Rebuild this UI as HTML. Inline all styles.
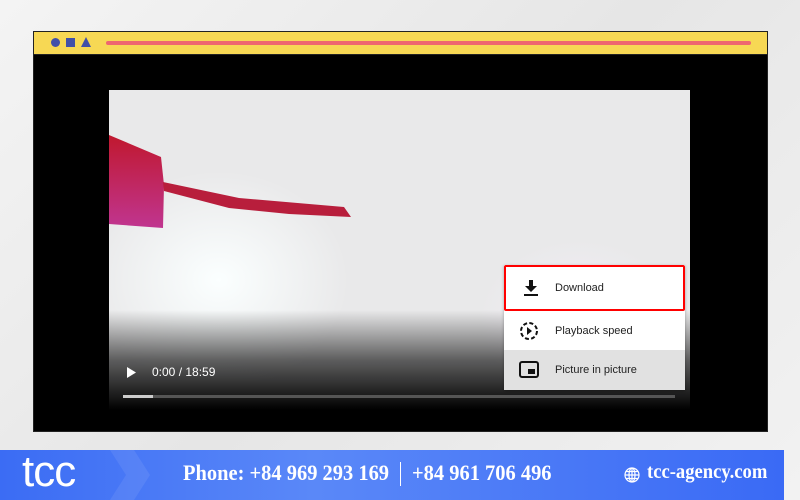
<!DOCTYPE html>
<html><head><style>
body{margin:0;width:800px;height:500px;overflow:hidden;background:linear-gradient(135deg,#f4f4f4,#e6e6e6 50%,#f2f2f2);font-family:"Liberation Sans",sans-serif;position:relative}
.frame{position:absolute;left:33px;top:31px;width:735px;height:401px;background:#000;border:1px solid #222;box-sizing:border-box}
.bar{position:absolute;left:0;top:0;width:100%;height:22px;background:#f7d854;border-bottom:1px solid #222}
.video{position:absolute;left:75px;top:58px;width:581px;height:320px;background:radial-gradient(ellipse 130px 110px at 110px 190px,#fbffff,rgba(240,240,244,0) 100%),radial-gradient(ellipse 100px 80px at 470px 230px,#f4eef8,rgba(0,0,0,0)),#e9e9ea;overflow:hidden}
.grad{position:absolute;left:0;bottom:0;width:100%;height:100px;background:linear-gradient(rgba(0,0,0,0),rgba(0,0,0,.6) 50%,#000)}
.menu{position:absolute;left:504px;top:265px;width:181px;height:125px;background:#fff;font-size:11px;color:#222;box-shadow:0 1px 3px rgba(0,0,0,.3)}
.it{position:absolute;left:0;width:181px;display:flex;align-items:center}
.it span{position:absolute;left:51px}
.footer{position:absolute;left:0;top:450px;width:784px;height:50px;background:linear-gradient(90deg,#3b6cf4,#5a88f8 40%,#3a6af5)}
.ft{position:absolute;color:#fff;font-family:"Liberation Serif",serif;font-weight:bold;font-size:22px;top:10px;transform-origin:0 50%;white-space:nowrap}
</style></head><body>
<div class="frame">
 <div class="bar">
  <div style="position:absolute;left:17px;top:6px;width:9px;height:9px;border-radius:50%;background:#4150a8"></div>
  <div style="position:absolute;left:32px;top:6px;width:9px;height:9px;background:#4150a8"></div>
  <div style="position:absolute;left:47px;top:5px;width:0;height:0;border-left:5px solid transparent;border-right:5px solid transparent;border-bottom:10px solid #4150a8"></div>
  <div style="position:absolute;left:72px;top:9px;width:645px;height:4px;border-radius:2px;background:#ee6670"></div>
 </div>
 <div class="video">
  <svg width="581" height="320" style="position:absolute;left:0;top:0">
   <defs><linearGradient id="r" x1="0" y1="0" x2="0" y2="1"><stop offset="0" stop-color="#c0182e"/><stop offset="1" stop-color="#c03590"/></linearGradient></defs>
   <path d="M0 45 L52 67 L55 95 L54 138 L0 134 Z" fill="url(#r)"/>
   <path d="M54 92 L130 108 L235 117 L242 127 L180 124 L120 118 L55 101 Z" fill="#b81e3c"/>
  </svg>
  <div class="grad"></div>
  <svg style="position:absolute;left:17px;top:276px" width="12" height="13"><path d="M1 1 L10 6.5 L1 12Z" fill="#fff"/></svg>
  <div style="position:absolute;left:43px;top:275px;color:#fff;font-size:12px">0:00 / 18:59</div>
  <div style="position:absolute;left:14px;top:305px;width:552px;height:3px;background:#555"></div>
  <div style="position:absolute;left:14px;top:305px;width:30px;height:3px;background:#ccc"></div>
 </div>
</div>
<div class="menu">
 <div class="it" style="top:0;height:46px;box-sizing:border-box;border:2px solid #f00;border-radius:2px"><svg style="position:absolute;left:18px;top:13px" width="14" height="16"><path d="M5 0h4v6h4l-6 6-6-6h4z M0 14h14v2H0z" fill="#111"/></svg><span style="left:49px">Download</span></div>
 <div class="it" style="top:46px;height:39px"><svg style="position:absolute;left:15px;top:10px" width="20" height="20"><circle cx="10" cy="10" r="8" fill="none" stroke="#111" stroke-width="2" stroke-dasharray="4 2.3"/><path d="M8 6l5 4-5 4z" fill="#111"/></svg><span>Playback speed</span></div>
 <div class="it" style="top:85px;height:40px;background:#e1e1e1"><svg style="position:absolute;left:15px;top:11px" width="20" height="17"><rect x="1" y="1" width="18" height="15" rx="2" fill="none" stroke="#111" stroke-width="2"/><rect x="9" y="8" width="7" height="5" fill="#111"/></svg><span>Picture in picture</span></div>
</div>
<div class="footer">
 <div style="position:absolute;left:110px;top:0;width:40px;height:50px;background:rgba(255,255,255,.08);clip-path:polygon(0 0,60% 0,100% 50%,60% 100%,0 100%,40% 50%)"></div>
 <div style="position:absolute;left:22px;top:-3px;color:#fff;font-size:44px;font-family:'Liberation Sans',sans-serif;letter-spacing:-1px">tcc</div>
 <div class="ft" style="left:183px;transform:scaleX(0.93)">Phone: +84 969 293 169</div>
 <div style="position:absolute;left:400px;top:12px;width:1px;height:24px;background:#fff"></div>
 <div class="ft" style="left:412px;transform:scaleX(0.93)">+84 961 706 496</div>
 <svg style="position:absolute;left:624px;top:17px" width="16" height="16" fill="none" stroke="#fff" stroke-width="1.2"><circle cx="8" cy="8" r="7"/><ellipse cx="8" cy="8" rx="3" ry="7"/><path d="M1 8h14M2 4.5h12M2 11.5h12M8 1v14"/></svg>
 <div class="ft" style="left:647px;font-size:20px;top:11px;transform:scaleX(0.93)">tcc-agency.com</div>
</div>
</body></html>
